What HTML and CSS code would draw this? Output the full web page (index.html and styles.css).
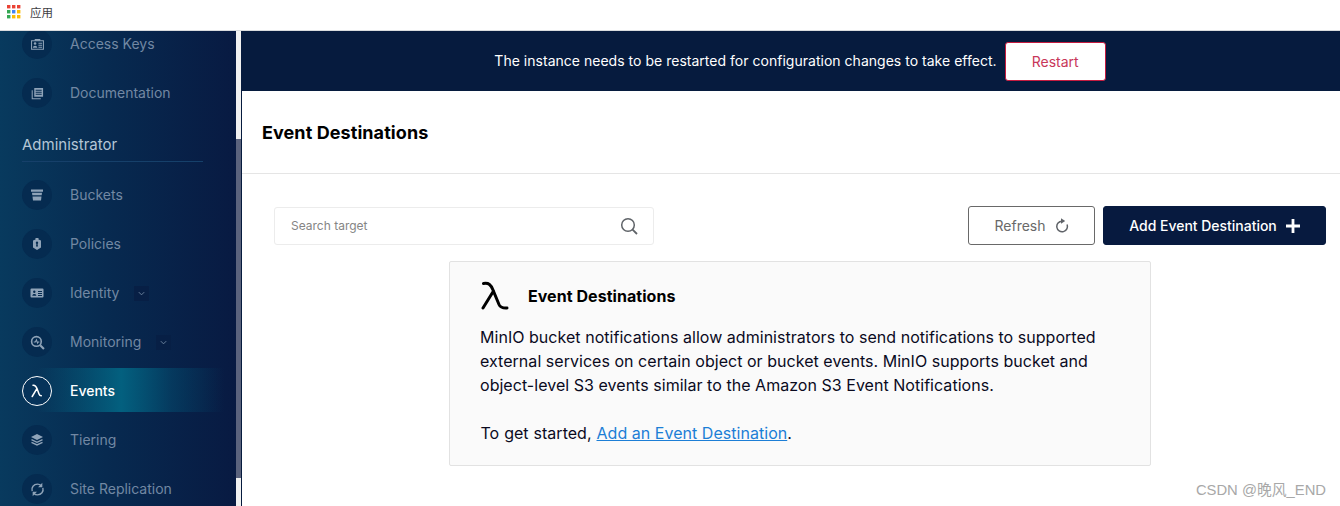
FILE: index.html
```html
<!DOCTYPE html>
<html lang="en">
<head>
<meta charset="utf-8">
<title>Event Destinations</title>
<link rel="stylesheet" href="styles.css">
</head>
<body>
<header class="bookmarks">
  <svg class="apps" width="14" height="14" viewBox="0 0 14 14">
    <rect x="0" y="0" width="3.4" height="3.4" fill="#ea4335"/><rect x="5" y="0" width="3.4" height="3.4" fill="#ea4335"/><rect x="10" y="0" width="3.4" height="3.4" fill="#ea4335"/>
    <rect x="0" y="5" width="3.4" height="3.4" fill="#34a853"/><rect x="5" y="5" width="3.4" height="3.4" fill="#4285f4"/><rect x="10" y="5" width="3.4" height="3.4" fill="#fbbc05"/>
    <rect x="0" y="10" width="3.4" height="3.4" fill="#34a853"/><rect x="5" y="10" width="3.4" height="3.4" fill="#fbbc05"/><rect x="10" y="10" width="3.4" height="3.4" fill="#fbbc05"/>
  </svg>
  <span class="bookmark-label">应用</span>
</header>
<div class="app">
  <nav class="sidebar">
    <a class="nav-item"><span class="nav-icon"><svg viewBox="0 0 14 14" width="13" height="13"><path fill="none" stroke="currentColor" stroke-width="1.1" d="M.6 3h12.8v9H.6z"/><circle cx="4.4" cy="6" r="1.4" fill="currentColor"/><path fill="currentColor" d="M2 10.5c0-3 4.8-3 4.8 0zM8 5h4v1.2H8zM8 7.2h4v1.2H8zM8 9.4h4v1.2H8zM4 1h6v2H4z"/></svg></span><span class="nav-label">Access Keys</span></a>
    <a class="nav-item"><span class="nav-icon"><svg viewBox="0 0 14 14" width="13" height="13"><path fill="currentColor" d="M3.5 1H13v9.5H3.5zM5 3v1h6.5V3zm0 2.2v1h6.5v-1zm0 2.2v1h6.5v-1z" fill-rule="evenodd"/><path fill="none" stroke="currentColor" stroke-width="1.1" d="M1.3 3.5v9.2h9.2"/></svg></span><span class="nav-label">Documentation</span></a>
    <div class="nav-section">Administrator</div>
    <a class="nav-item"><span class="nav-icon"><svg viewBox="0 0 14 14" width="14" height="14"><path fill="currentColor" d="M1 1.5h12v2.2H1zM2 4.800h10l-.3 2.500H2.300zM2.500 8.400h9L11 12.500H3z"/></svg></span><span class="nav-label">Buckets</span></a>
    <a class="nav-item"><span class="nav-icon"><svg viewBox="0 0 14 14" width="14" height="14"><path fill="currentColor" fill-rule="evenodd" d="M5.500 1h3v1.400l2.500 1.200v7L7 13l-4-2.400v-7l2.500-1.200zM7 4.600a1.300 1.300 0 0 0-.6 2.400L6 9.600h2L7.600 7A1.300 1.300 0 0 0 7 4.600z"/></svg></span><span class="nav-label">Policies</span></a>
    <a class="nav-item"><span class="nav-icon"><svg viewBox="0 0 14 14" width="14" height="14"><path fill="currentColor" fill-rule="evenodd" d="M1.500 2.500h11a1 1 0 0 1 1 1v7a1 1 0 0 1-1 1h-11a1 1 0 0 1-1-1v-7a1 1 0 0 1 1-1zM4.300 4.500a1.200 1.200 0 1 0 0 2.400 1.200 1.200 0 0 0 0-2.400zM2.300 9.800h4c0-2.300-4-2.300-4 0zM8 5v1h4V5zm0 2v1h4V7zm0 2v1h4V9z"/></svg></span><span class="nav-label">Identity</span><span class="chevron"><svg viewBox="0 0 10 10" width="9" height="9"><path fill="none" stroke="currentColor" stroke-width="1" d="M2 3.500 5 6.500 8 3.500"/></svg></span></a>
    <a class="nav-item"><span class="nav-icon"><svg viewBox="0 0 14 14" width="15" height="15"><circle cx="6" cy="6" r="4.500" fill="none" stroke="currentColor" stroke-width="1.500"/><path stroke="currentColor" stroke-width="2" d="M9.500 9.500 13 13"/><path fill="none" stroke="currentColor" stroke-width="1" d="M3.500 6.500h1.500l1-2 1 3 .7-1h1"/></svg></span><span class="nav-label">Monitoring</span><span class="chevron"><svg viewBox="0 0 10 10" width="9" height="9"><path fill="none" stroke="currentColor" stroke-width="1" d="M2 3.500 5 6.500 8 3.500"/></svg></span></a>
    <a class="nav-item is-active"><span class="nav-icon"><svg viewBox="0 0 14 14" width="14" height="14"><path fill="none" stroke="currentColor" stroke-width="1.500" stroke-linecap="round" d="M3 1.200c2.600-.4 3.200 1.200 4 3.300l2 5.500c.4 1.100 1 1.700 2.300 1.700M6.900 4.700 2.200 12.500"/></svg></span><span class="nav-label">Events</span></a>
    <a class="nav-item"><span class="nav-icon"><svg viewBox="0 0 14 14" width="14" height="14"><path fill="currentColor" d="M7 1 13 4 7 7 1 4z"/><path fill="none" stroke="currentColor" stroke-width="1.400" d="M1.500 6.600 7 9.300l5.500-2.700M1.500 9.300 7 12l5.500-2.700"/></svg></span><span class="nav-label">Tiering</span></a>
    <a class="nav-item"><span class="nav-icon"><svg viewBox="0 0 14 14" width="15" height="15"><path fill="none" stroke="currentColor" stroke-width="1.300" d="M2 8.500C1 5 3.500 2 7 2c1.400 0 2.500.5 3.300 1.300M12 5.500C13 9 10.500 12 7 12c-1.400 0-2.500-.5-3.300-1.300"/><path fill="currentColor" d="M11.500 .8v4h-4zM2.500 13.200v-4h4z"/></svg></span><span class="nav-label">Site Replication</span></a>
  </nav>
  <div class="scrollbar"><div class="scroll-thumb"></div></div>
  <main class="main">
    <div class="banner">
      <span class="banner-text">The instance needs to be restarted for configuration changes to take effect.</span>
      <button class="btn-restart">Restart</button>
    </div>
    <div class="page-head"><h1>Event Destinations</h1></div>
    <div class="content">
      <div class="toolbar">
        <div class="search">
          <span class="search-text">Search target</span>
          <svg width="18" height="18" viewBox="0 0 18 18"><circle cx="8" cy="8" r="6.300" fill="none" stroke="#5f6368" stroke-width="1.500"/><path d="M12.600 12.600 17 17" stroke="#5f6368" stroke-width="1.800"/></svg>
        </div>
        <div class="actions">
          <button class="btn btn-outline">Refresh
            <svg width="14" height="15" viewBox="0 0 14 15"><path fill="none" stroke="#5f6368" stroke-width="1.500" d="M7 3.200A5.300 5.300 0 1 0 12 6.500"/><path fill="#5f6368" d="M6 .3 10.200 3 6 5.700z"/></svg>
          </button>
          <button class="btn btn-primary">Add Event Destination
            <svg width="14" height="14" viewBox="0 0 14 14"><path stroke="#fff" stroke-width="2.800" d="M7 0v14M0 7h14"/></svg>
          </button>
        </div>
      </div>
      <section class="help">
        <div class="help-head">
          <svg width="30" height="29" viewBox="0 0 30 29"><path fill="none" stroke="#000" stroke-width="3" stroke-linecap="round" d="M3.500 2.500C9 1.800 10.800 3.500 13 9l6 14.500c1.200 2.700 3 3.800 8 3.500M13.500 10 3 27"/></svg>
          <h2>Event Destinations</h2>
        </div>
        <p>MinIO bucket notifications allow administrators to send notifications to supported external services on certain object or bucket events. MinIO supports bucket and object-level S3 events similar to the Amazon S3 Event Notifications.</p>
        <p class="help-cta">To get started, <a class="link">Add an Event Destination</a>.</p>
      </section>
    </div>
  </main>
</div>
<div class="watermark">CSDN @晚风_END</div>
</body>
</html>
```
FILE: styles.css
```css
* { box-sizing: border-box; }
html, body { margin: 0; height: 506px; overflow: hidden; }
body { font-family: Inter, "Noto Sans CJK SC", sans-serif; background: #fff; position: relative; }
.bookmarks { height: 31px; background: #fff; border-bottom: 1px solid #d9dbdd; display: flex; align-items: flex-start; padding: 5px 0 0 7px; }
.apps { display: block; }
.bookmark-label { font-family: "Noto Sans CJK SC", sans-serif; font-size: 11.500px; line-height: 14px; color: #3c4043; margin-left: 9px; }
.app { display: flex; height: 475px; }
.sidebar { width: 236px; flex: none; overflow: hidden; background: linear-gradient(90deg, #083a5e 0%, #072a50 45%, #081a42 100%); }
.nav-item { display: flex; align-items: center; height: 30px; margin: -2px 0 21px 22px; color: #7288a3; font-size: 14px; position: relative; }
.nav-icon { width: 30px; height: 30px; border-radius: 50%; background: #052b50; display: flex; align-items: center; justify-content: center; color: #8fa3b8; flex: none; margin-right: 18px; position: relative; z-index: 1; }
.nav-icon svg { display: block; }
.nav-label { line-height: 18px; white-space: nowrap; position: relative; z-index: 1; }
.chevron { width: 15px; height: 15px; background: #071f45; margin-left: 15px; display: flex; align-items: center; justify-content: center; color: #7288a3; }
.nav-section { color: #b4c6d6; font-size: 15px; line-height: 18px; margin: 28px 33px 20px 22px; padding: 0; border-bottom: 1px solid #16406a; height: 26px; }
.is-active { color: #fff; font-weight: 500; }
.is-active .nav-icon { background: #06335a; border: 1px solid #fff; color: #fff; }
.is-active::before { content: ""; position: absolute; left: 15px; right: 12px; top: -8px; bottom: -6px; background: linear-gradient(90deg, rgba(2, 96, 130, 0) 0%, #03607f 45%, rgba(3, 80, 115, .5) 72%, rgba(8, 32, 70, 0) 100%); }
.scrollbar { width: 5px; flex: none; background: #f1f1f1; padding-top: 108px; }
.scroll-thumb { height: 339px; background: #5b637d; }
.main { flex: 1; min-width: 0; border-left: 1px solid #061b3e; }
.banner { height: 60px; background: #061b3e; color: #fff; display: flex; align-items: center; justify-content: center; gap: 8px; font-size: 14px; padding-left: 18px; }
.banner-text { letter-spacing: .02px; margin-bottom: 2px; }
.btn-restart { width: 101px; height: 39px; background: #fff; border: 1px solid #c51b3f; border-radius: 3px; color: #c8375a; font: 400 14px Inter, sans-serif; }
.page-head { height: 83px; border-bottom: 1px solid #e5e5e5; display: flex; align-items: center; padding: 2px 0 0 20px; }
h1 { margin: 0; font-size: 18px; font-weight: 700; line-height: 22px; color: #000; letter-spacing: .08px; }
.content { padding: 32px 14px 0 32px; }
.toolbar { display: flex; justify-content: space-between; align-items: center; height: 39px; }
.search { width: 380px; height: 38px; border: 1px solid #ececec; border-radius: 3px; display: flex; align-items: center; justify-content: space-between; padding: 0 15px 0 16px; }
.search-text { font-size: 12px; color: #858585; }
.actions { display: flex; gap: 8px; }
.btn { height: 39px; border-radius: 3px; font: 400 14px Inter, sans-serif; display: flex; align-items: center; justify-content: center; gap: 9px; }
.btn-outline { width: 127px; background: #fff; border: 1px solid #696969; color: #696969; }
.btn-primary { width: 223px; background: #071a3f; border: 1px solid #071a3f; color: #fff; font-weight: 500; letter-spacing: -.02px; }
.help { width: 702px; height: 205px; margin: 16px 0 0 175px; background: #fafafa; border: 1px solid #e2e2e2; border-radius: 2px; padding: 19px 30px 18px; }
.help-head { display: flex; align-items: center; gap: 18px; height: 29px; margin-bottom: 15px; }
h2 { margin: 0; font-size: 16px; font-weight: 700; line-height: 20px; color: #000; letter-spacing: .05px; }
.help p { margin: 0; font-size: 16px; line-height: 24px; color: #0a0a1e; letter-spacing: .035px; }
.help .help-cta { margin-top: 24px; padding-left: .5px; word-spacing: .35px; }
.link { color: #1c7ed6; text-decoration: underline; word-spacing: 0; }
.watermark { position: absolute; right: 14px; bottom: 7px; font-family: "Liberation Sans", "Noto Sans CJK SC", sans-serif; font-size: 14.800px; line-height: 18px; color: #a8a8a8; }
```
